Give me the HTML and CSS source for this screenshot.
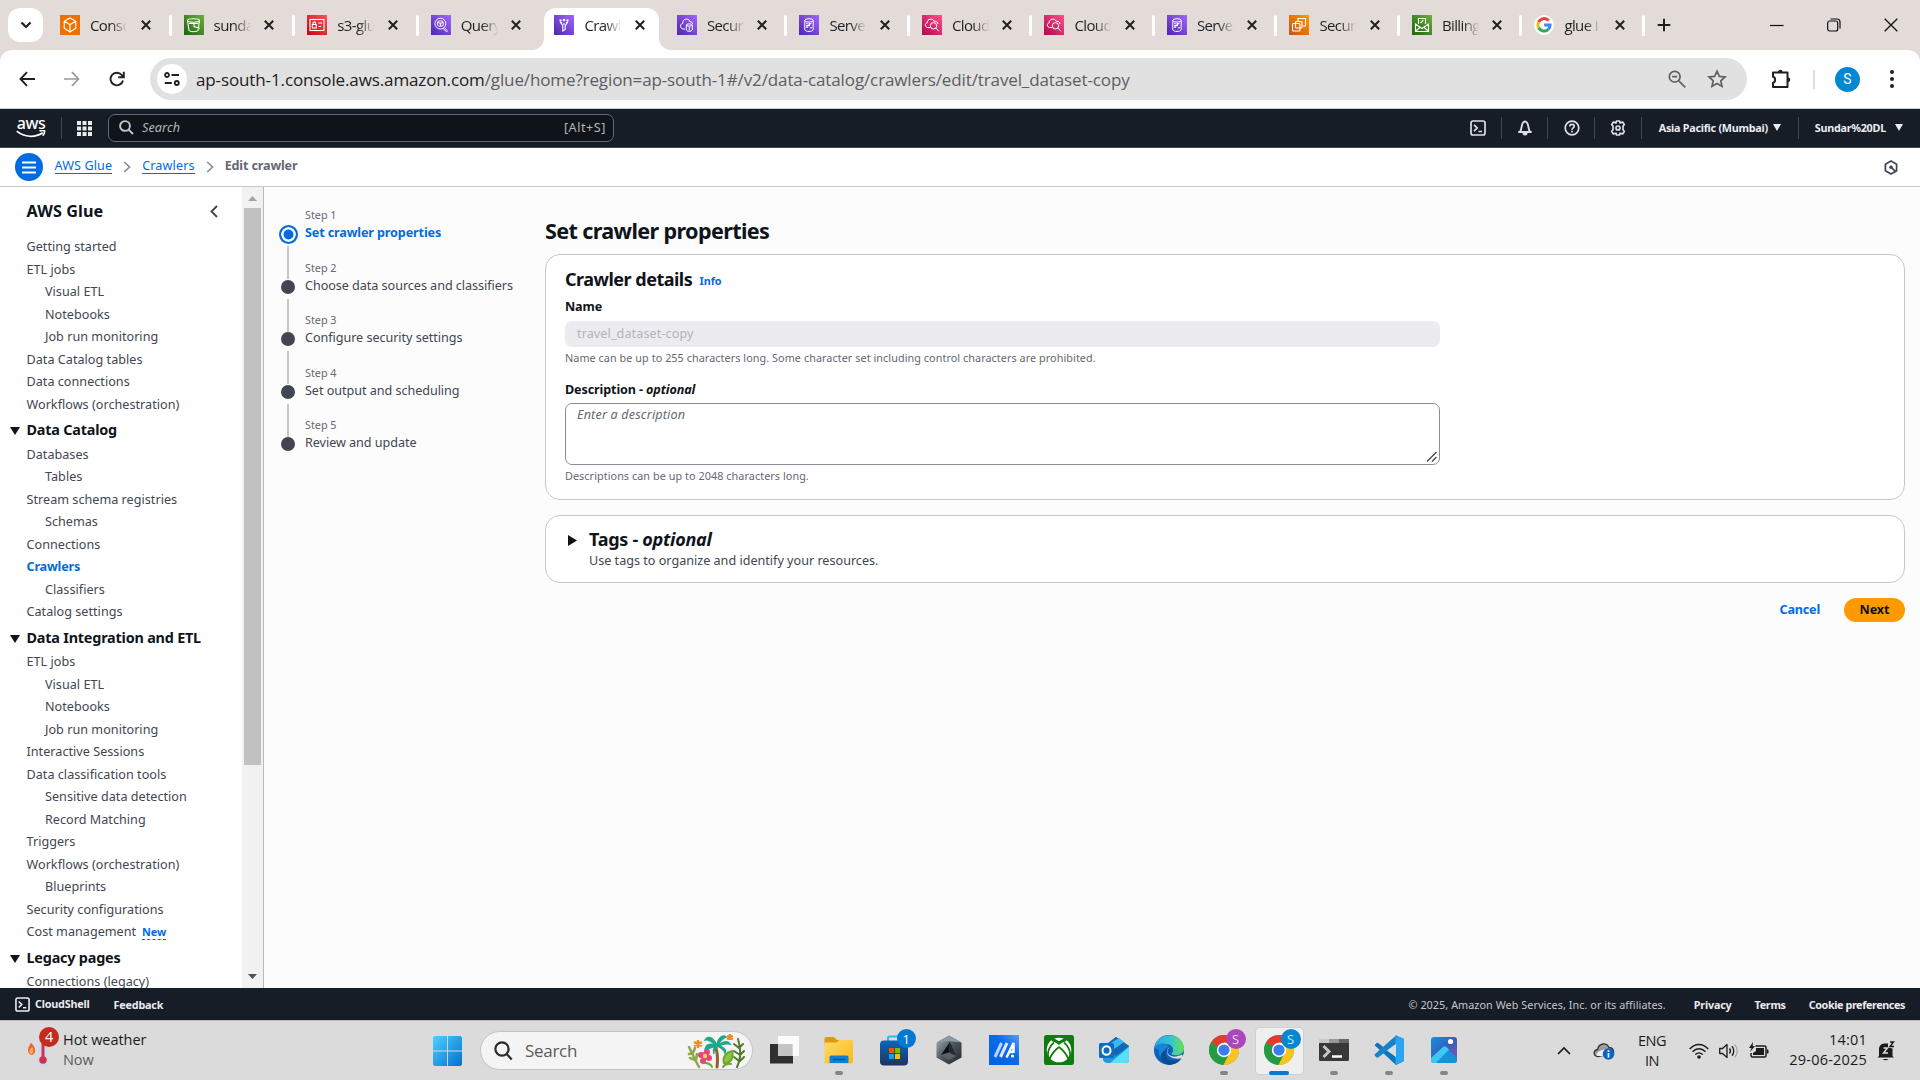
FILE: index.html
```html
<!DOCTYPE html>
<html lang="en">
<head>
<meta charset="utf-8">
<title>Crawlers - AWS Glue</title>
<link rel="stylesheet" href="styles.css">
</head>
<body>
<svg class="defs" aria-hidden="true">
  <defs>
    <linearGradient id="gPurple" x1="0" y1="1" x2="1" y2="0"><stop offset="0" stop-color="#4d27aa"/><stop offset="1" stop-color="#a166ff"/></linearGradient>
    <linearGradient id="gPink" x1="0" y1="1" x2="1" y2="0"><stop offset="0" stop-color="#b0084d"/><stop offset="1" stop-color="#ff4f8b"/></linearGradient>
    <linearGradient id="gGreen" x1="0" y1="1" x2="1" y2="0"><stop offset="0" stop-color="#1b660f"/><stop offset="1" stop-color="#6cae3e"/></linearGradient>
    <linearGradient id="gRed" x1="0" y1="1" x2="1" y2="0"><stop offset="0" stop-color="#bd0816"/><stop offset="1" stop-color="#ff5252"/></linearGradient>
    <linearGradient id="gOrange" x1="0" y1="1" x2="1" y2="0"><stop offset="0" stop-color="#c8511b"/><stop offset="1" stop-color="#ff9900"/></linearGradient>
    <linearGradient id="gWin" x1="0" y1="0" x2="1" y2="1"><stop offset="0" stop-color="#4fd0ff"/><stop offset="1" stop-color="#0070d0"/></linearGradient>
    <linearGradient id="gFolder" x1="0" y1="0" x2="1" y2="1"><stop offset="0" stop-color="#ffdb6b"/><stop offset="1" stop-color="#fdb813"/></linearGradient>
    <linearGradient id="gStore" x1="0" y1="0" x2="0" y2="1"><stop offset="0" stop-color="#0a66b8"/><stop offset="1" stop-color="#1d355f"/></linearGradient>
    <linearGradient id="gEdge" x1="0" y1="0" x2="1" y2="0"><stop offset="0" stop-color="#2aa8e0"/><stop offset=".55" stop-color="#35c5cf"/><stop offset="1" stop-color="#69e04f"/></linearGradient>
    <linearGradient id="gPhoto" x1="0" y1="0" x2="1" y2="1"><stop offset="0" stop-color="#1592e0"/><stop offset=".5" stop-color="#365fb8"/><stop offset="1" stop-color="#9a4fb8"/></linearGradient>
    <linearGradient id="gHex" x1="0" y1="0" x2="1" y2="1"><stop offset="0" stop-color="#aab4bc"/><stop offset=".5" stop-color="#4c535a"/><stop offset="1" stop-color="#23272b"/></linearGradient>
    <linearGradient id="gMyAsus" x1="1" y1="0" x2="0" y2="1"><stop offset="0" stop-color="#5c9bff"/><stop offset=".4" stop-color="#0a6be8"/><stop offset="1" stop-color="#0560e0"/></linearGradient>
    <symbol id="close" viewBox="0 0 12 12"><path d="M1.800 1.800l8.400 8.400M10.200 1.800l-8.400 8.400" fill="none" stroke="#1f2023" stroke-width="2"/></symbol>
    <symbol id="athena" viewBox="0 0 20 20"><rect width="20" height="20" fill="url(#gPurple)"/><g fill="none" stroke="#fff" stroke-width="1"><circle cx="9.400" cy="8.600" r="5.400"/><path d="M13.200 12.500l3.300 3.300-1 1-3.400-3.300"/><ellipse cx="9.400" cy="7" rx="2.700" ry="1.100"/><path d="M6.700 7v3.400c.8 1.200 4.600 1.200 5.400 0V7M9.400 8v3"/></g></symbol>
    <symbol id="cloudsec" viewBox="0 0 20 20"><rect width="20" height="20" fill="url(#gPurple)"/><g fill="none" stroke="#fff" stroke-width="1"><path d="M8 14H6C2.500 13.500 3 8.500 5.800 8.500 5.300 3.500 12 2.500 13 6.800c1.800 0 2.600 1 2.600 2.200"/><ellipse cx="12.300" cy="10" rx="3" ry="1.100"/><path d="M9.300 10v5c1 1.800 5 1.800 6 0v-5M12.300 11.500v4"/></g></symbol>
    <symbol id="redshift" viewBox="0 0 20 20"><rect width="20" height="20" fill="url(#gPurple)"/><g fill="none" stroke="#fff" stroke-width="1"><ellipse cx="10" cy="5.400" rx="4.200" ry="1.700"/><path d="M5.800 5.400v9.400c1 2.200 7.400 2.200 8.400 0V5.400"/><path d="M8 13v-2.500h2.300V8.600h2M8 9V8M12 12v1.500" stroke-width="1.300"/></g></symbol>
    <symbol id="cloudwatch" viewBox="0 0 20 20"><rect width="20" height="20" fill="url(#gPink)"/><g fill="none" stroke="#fff" stroke-width="1"><path d="M8 12.500H5.500C2.500 12 2.800 8 5.200 8 4.800 3.600 11 2.700 12.200 6.300c2.500-.3 3.800 1.200 3.800 2.700"/><circle cx="11.500" cy="10.800" r="3.200"/><path d="M13.800 13l3 3.200"/></g></symbol>
  </defs>
</svg>

<header class="tabstrip">
  <button class="tab-search"><svg width="12" height="8" viewBox="0 0 12 8"><path d="M1.500 1.500L6 6l4.500-4.500" fill="none" stroke="#1f2023" stroke-width="2.200"/></svg></button>
  <div class="tab wide"><svg class="fav" viewBox="0 0 20 20"><rect width="20" height="20" fill="#ed7100"/><path d="M10 3l5.800 3.200v7L10 17l-5.800-3.800v-7zM4.200 6.200L10 9.500l5.800-3.300M10 9.500V17" fill="none" stroke="#fff" stroke-width="1.100"/></svg><span class="tab-title">Conso</span><svg class="x"><use href="#close"/></svg></div>
  <div class="tab wide"><svg class="fav" viewBox="0 0 20 20"><rect width="20" height="20" fill="url(#gGreen)"/><g fill="none" stroke="#fff" stroke-width="1.100"><ellipse cx="9.500" cy="5.500" rx="6" ry="1.700"/><path d="M3.500 5.500L5 15.500c1.500 1.700 7.500 1.700 9 0l1.500-10M5 8.500h9M10 9v2.500l6 2"/></g></svg><span class="tab-title">sunda</span><svg class="x"><use href="#close"/></svg></div>
  <div class="tab wide"><svg class="fav" viewBox="0 0 20 20"><rect width="20" height="20" fill="url(#gRed)"/><g fill="none" stroke="#fff" stroke-width="1.100"><rect x="3" y="4.500" width="14" height="11"/><rect x="5.300" y="9.500" width="4" height="3.500"/><path d="M6 9.500V8c0-1.500 2.600-1.500 2.600 0v1.500M11.500 8h3.500M11.500 11.500h2.500"/></g></svg><span class="tab-title">s3-glu</span><svg class="x"><use href="#close"/></svg></div>
  <div class="tab wide last"><svg class="fav"><use href="#athena"/></svg><span class="tab-title">Query</span><svg class="x"><use href="#close"/></svg></div>
  <div class="tab active"><svg class="fav" viewBox="0 0 20 20"><rect width="20" height="20" fill="url(#gPurple)"/><g fill="none" stroke="#fff" stroke-width="1.100"><path d="M6 7l2.800 3.500V16l2.400-1.500v-4L14 7M6 7l2.200.8M14 7l-2.200.8"/><circle cx="10" cy="5" r=".8"/><circle cx="6.500" cy="5.500" r=".6"/><circle cx="13.500" cy="5.500" r=".6"/><path d="M10 8v2"/></g></svg><span class="tab-title">Crawl</span><svg class="x"><use href="#close"/></svg></div>
  <div class="tab"><svg class="fav"><use href="#cloudsec"/></svg><span class="tab-title">Secur</span><svg class="x"><use href="#close"/></svg></div>
  <div class="tab"><svg class="fav"><use href="#redshift"/></svg><span class="tab-title">Serve</span><svg class="x"><use href="#close"/></svg></div>
  <div class="tab"><svg class="fav"><use href="#cloudwatch"/></svg><span class="tab-title">Cloud</span><svg class="x"><use href="#close"/></svg></div>
  <div class="tab"><svg class="fav"><use href="#cloudwatch"/></svg><span class="tab-title">Cloud</span><svg class="x"><use href="#close"/></svg></div>
  <div class="tab"><svg class="fav"><use href="#redshift"/></svg><span class="tab-title">Serve</span><svg class="x"><use href="#close"/></svg></div>
  <div class="tab"><svg class="fav" viewBox="0 0 20 20"><rect width="20" height="20" fill="url(#gOrange)"/><g fill="none" stroke="#fff" stroke-width="1.100"><rect x="3.500" y="8.500" width="7.500" height="7.500" rx="1"/><rect x="6.500" y="6.500" width="6.500" height="6.500" rx="1"/><path d="M9 6V3.500h7.500v7.500H13.500"/></g></svg><span class="tab-title">Secur</span><svg class="x"><use href="#close"/></svg></div>
  <div class="tab"><svg class="fav" viewBox="0 0 20 20"><rect width="20" height="20" fill="url(#gGreen)"/><g fill="none" stroke="#fff" stroke-width="1.100"><path d="M6.500 9V3.500h7V9M8.500 8l2.800-2.800M3.500 9v7.500h13V9L10 13.500zM3.800 16l4-3.500M16.200 16l-4-3.500"/></g></svg><span class="tab-title">Billing</span><svg class="x"><use href="#close"/></svg></div>
  <div class="tab"><svg class="fav" viewBox="0 0 20 20"><circle cx="10" cy="10" r="10" fill="#fff"/><g fill="none" stroke-width="3"><path d="M14.800 5.600A6.200 6.200 0 0 0 4.600 7.200" stroke="#ea4335"/><path d="M4.600 7.200a6.200 6.200 0 0 0 0 5.600" stroke="#fbbc04"/><path d="M4.600 12.800a6.200 6.200 0 0 0 9.500 1.800" stroke="#34a853"/><path d="M14 14.700c1.500-1.300 2.200-3 2.100-4.700H10.200" stroke="#4285f4"/></g></svg><span class="tab-title">glue i</span><svg class="x"><use href="#close"/></svg></div>
  <svg class="newtab" viewBox="0 0 14 14"><path d="M7 .7v12.600M.7 7h12.600" stroke="#1f2023" stroke-width="2"/></svg>
  <div class="wincontrols">
    <svg width="14" height="14" viewBox="0 0 14 14"><path d="M0 7.500h13.500" stroke="#111" stroke-width="1.200"/></svg>
    <svg width="14" height="14" viewBox="0 0 14 14"><g fill="none" stroke="#111" stroke-width="1.200"><rect x=".7" y="3" width="10" height="10" rx="2"/><path d="M3.500 1H10c1.800 0 3 1.200 3 3v6.500"/></g></svg>
    <svg width="14" height="14" viewBox="0 0 14 14"><path d="M.7.700l12.600 12.600M13.300.700L.7 13.300" stroke="#111" stroke-width="1.300"/></svg>
  </div>
</header>

<div class="toolbar-bg"><div class="toolbar">
  <svg class="nav-ic" viewBox="0 0 16 16"><path d="M8 1.200L1.500 8 8 14.800M1.500 8H16" fill="none" stroke="#1f2023" stroke-width="1.900"/></svg>
  <svg class="nav-ic" viewBox="0 0 16 16"><path d="M8 1.200L14.500 8 8 14.800M14.500 8H0" fill="none" stroke="#9a9a9a" stroke-width="1.700"/></svg>
  <svg class="nav-ic" viewBox="0 0 16 16"><path d="M14 9.500A6.300 6.300 0 1 1 12.700 4L14.500 6M14.800.700V6.200H9.300" fill="none" stroke="#1f2023" stroke-width="1.900"/></svg>
  <div class="omnibox">
    <span class="site-info"><svg width="16" height="14" viewBox="0 0 16 14"><g fill="none" stroke="#1f2023" stroke-width="1.800"><circle cx="3" cy="3" r="2"/><path d="M7.500 3H15M.8 11h7"/><circle cx="12.800" cy="11" r="2"/></g></svg></span>
    <span class="url">ap-south-1.console.aws.amazon.com<span class="url-path">/glue/home?region=ap-south-1#/v2/data-catalog/crawlers/edit/travel_dataset-copy</span></span>
    <svg class="zoom-ic" viewBox="0 0 18 18"><g fill="none" stroke="#606060" stroke-width="1.700"><circle cx="6.700" cy="6.700" r="5.400"/><path d="M10.800 10.800l6.500 6.500M4.200 6.700h5"/></g></svg>
    <svg class="star-ic" viewBox="0 0 20 20"><path d="M10 2.200l2.400 5.200 5.600.6-4.200 3.800 1.200 5.600-5-2.900-5 2.900 1.200-5.600L2 8l5.600-.6z" fill="none" stroke="#606060" stroke-width="1.700"/></svg>
  </div>
  <svg class="ext-ic" viewBox="0 0 22 22"><path d="M3 4.500h14.500v14.500H3v-4.200c2.800-.6 2.800-5.500 0-6z" fill="none" stroke="#1f2023" stroke-width="2" stroke-linejoin="round"/><path d="M8 4a2.300 2.300 0 0 1 4.600 0zM18 9.500a2.300 2.300 0 0 1 0 4.600z" fill="#1f2023"/></svg>
  <span class="tb-sep"></span>
  <span class="avatar">S</span>
  <svg class="dots" viewBox="0 0 4 18"><circle cx="2" cy="2" r="2"/><circle cx="2" cy="9" r="2"/><circle cx="2" cy="16" r="2"/></svg>
</div></div>

<div class="awsbar">
  <div class="aws-logo"><span>aws</span><svg viewBox="0 0 30 8"><path d="M.7 1.200c8 6.500 18.500 6.500 26 1.500M23.500 1c2-.6 4.200-.7 5 0 .3 1.300-.5 3.300-1.800 4.800" fill="none" stroke="#fff" stroke-width="1.700"/></svg></div>
  <span class="bar-sep"></span>
  <svg class="grid-ic" viewBox="0 0 15 15"><g fill="#e9ebed"><path d="M0 0h4v4H0zM5.500 0h4v4h-4zM11 0h4v4h-4zM0 5.500h4v4H0zM5.500 5.500h4v4h-4zM11 5.500h4v4h-4zM0 11h4v4H0zM5.500 11h4v4h-4zM11 11h4v4h-4z"/></g></svg>
  <div class="aws-search"><svg width="15" height="15" viewBox="0 0 15 15"><g fill="none" stroke="#c6c6cd" stroke-width="1.900"><circle cx="6" cy="6" r="4.900"/><path d="M9.600 9.600L14 14"/></g></svg><em>Search</em><span>[Alt+S]</span></div>
  <div class="aws-tools">
    <i><svg width="16" height="16" viewBox="0 0 16 16"><g fill="none" stroke="#dedee3" stroke-width="1.700"><rect x="1" y="1" width="14" height="14" rx="2"/><path d="M4 4.800L7.200 8 4 11.200M8.500 11.500H12"/></g></svg></i>
    <i><svg width="16" height="16" viewBox="0 0 16 16"><path d="M3.500 11C5 9 4 1.500 8 1.500S11 9 12.500 11l1.500 1H2z" fill="none" stroke="#dedee3" stroke-width="1.900" stroke-linejoin="round"/><path d="M5.500 13h5a2.500 2.500 0 0 1-5 0z" fill="#dedee3"/></svg></i>
    <i><svg width="16" height="16" viewBox="0 0 16 16"><g fill="none" stroke="#dedee3" stroke-width="1.700"><circle cx="8" cy="8" r="6.800"/><path d="M5.800 6.500c0-3 4.400-2.800 4.400-.2C10.200 8 8 7.700 8 9.700M8 10.800v1.700"/></g></svg></i>
    <i><svg width="16" height="16" viewBox="0 0 16 16"><g fill="none" stroke="#dedee3" stroke-width="1.700" stroke-linejoin="round"><path d="M6.500 1h3l.5 1.900 2.600-.8 1.700 2.500L13 6v3.800l1.300 1.700-1.700 2.400-2.600-.7-.5 1.800h-3L6 13.200l-2.600.7-1.700-2.400L3 9.800V6L1.700 4.600l1.700-2.500 2.600.8z"/><circle cx="8" cy="8" r="2"/></g></svg></i>
  </div>
  <div class="menu region"><b>Asia Pacific (Mumbai)</b><svg class="caret" viewBox="0 0 8 7"><path d="M0 0h8L4 7z" fill="#ebebf0"/></svg></div>
  <div class="menu user"><b>Sundar%20DL</b><svg class="caret" viewBox="0 0 8 7"><path d="M0 0h8L4 7z" fill="#ebebf0"/></svg></div>
</div>

<nav class="crumbs">
  <span class="burger"><svg width="14" height="13" viewBox="0 0 14 13"><path d="M0 1.500h14M0 6.500h14M0 11.500h14" stroke="#fff" stroke-width="1.800"/></svg></span>
  <a>AWS Glue</a><svg class="chev" viewBox="0 0 8 12"><path d="M1.200 1L6.500 6l-5.300 5" fill="none" stroke="#8c8c94" stroke-width="1.700"/></svg>
  <a>Crawlers</a><svg class="chev" viewBox="0 0 8 12"><path d="M1.200 1L6.500 6l-5.300 5" fill="none" stroke="#8c8c94" stroke-width="1.700"/></svg>
  <b>Edit crawler</b>
  <svg class="hex" viewBox="0 0 14 15"><path d="M7 1l5.600 3.200v6.600L7 14l-5.600-3.200V4.200z" fill="none" stroke="#424650" stroke-width="1.700"/><circle cx="7" cy="7.300" r="1.800" fill="#424650"/><path d="M7 7.300l5 4.500" stroke="#424650" stroke-width="1.700"/></svg>
</nav>

<div class="body">
  <aside class="side">
    <div class="side-list">
      <div class="side-title"><span>AWS Glue</span><svg width="8" height="13" viewBox="0 0 8 13"><path d="M7 1L1.500 6.500 7 12" fill="none" stroke="#424650" stroke-width="1.900"/></svg></div>
      <a>Getting started</a><a>ETL jobs</a><a class="sub">Visual ETL</a><a class="sub">Notebooks</a><a class="sub">Job run monitoring</a><a>Data Catalog tables</a><a>Data connections</a><a>Workflows (orchestration)</a>
      <h4>Data Catalog</h4>
      <a>Databases</a><a class="sub">Tables</a><a>Stream schema registries</a><a class="sub">Schemas</a><a>Connections</a><a class="current">Crawlers</a><a class="sub">Classifiers</a><a>Catalog settings</a>
      <h4>Data Integration and ETL</h4>
      <a>ETL jobs</a><a class="sub">Visual ETL</a><a class="sub">Notebooks</a><a class="sub">Job run monitoring</a><a>Interactive Sessions</a><a>Data classification tools</a><a class="sub">Sensitive data detection</a><a class="sub">Record Matching</a><a>Triggers</a><a>Workflows (orchestration)</a><a class="sub">Blueprints</a><a>Security configurations</a><a>Cost management <span class="new">New</span></a>
      <h4>Legacy pages</h4>
      <a>Connections (legacy)</a>
    </div>
    <div class="scroll"><svg width="9" height="5" viewBox="0 0 9 5"><path d="M0 5h9L4.500 0z" fill="#a3a3a3"/></svg><span class="thumb"></span><svg width="9" height="5" viewBox="0 0 9 5"><path d="M0 0h9L4.500 5z" fill="#505050"/></svg></div>
  </aside>

  <ol class="steps">
    <li class="on"><span class="rail"><span class="ring"></span></span><div><small>Step 1</small><p>Set crawler properties</p></div></li>
    <li><span class="rail"><span class="dot"></span></span><div><small>Step 2</small><p>Choose data sources and classifiers</p></div></li>
    <li><span class="rail"><span class="dot"></span></span><div><small>Step 3</small><p>Configure security settings</p></div></li>
    <li><span class="rail"><span class="dot"></span></span><div><small>Step 4</small><p>Set output and scheduling</p></div></li>
    <li><span class="rail"><span class="dot"></span></span><div><small>Step 5</small><p>Review and update</p></div></li>
  </ol>

  <main class="content">
    <h1>Set crawler properties</h1>
    <section class="card details">
      <h2>Crawler details <a>Info</a></h2>
      <label>Name</label>
      <div class="input">travel_dataset-copy</div>
      <p class="hint">Name can be up to 255 characters long. Some character set including control characters are prohibited.</p>
      <label class="second">Description - <em>optional</em></label>
      <div class="textarea">Enter a description<svg width="10" height="10" viewBox="0 0 10 10"><path d="M0 9.500L9.500 0M5 9.500L9.500 5" stroke="#444" stroke-width="1.300"/></svg></div>
      <p class="hint">Descriptions can be up to 2048 characters long.</p>
    </section>
    <section class="card tags">
      <svg width="9" height="11" viewBox="0 0 9 11"><path d="M0 0l9 5.500L0 11z" fill="#0f141a"/></svg>
      <div><h2>Tags - <em>optional</em></h2><p>Use tags to organize and identify your resources.</p></div>
    </section>
    <div class="actions"><button class="link">Cancel</button><button class="primary">Next</button></div>
  </main>
</div>

<footer class="awsfoot">
  <svg width="15" height="15" viewBox="0 0 16 16"><g fill="none" stroke="#ebebf0" stroke-width="1.700"><rect x="1" y="1" width="14" height="14" rx="2"/><path d="M4 4.800L7.200 8 4 11.200M8.500 11.500H12"/></g></svg>
  <b class="f-shell">CloudShell</b><b class="f-feed">Feedback</b>
  <span class="f-copy">© 2025, Amazon Web Services, Inc. or its affiliates.</span>
  <b class="f-priv">Privacy</b><b class="f-terms">Terms</b><b class="f-cook">Cookie preferences</b>
</footer>

<div class="taskbar">
  <div class="weather">
    <svg width="36" height="40" viewBox="0 0 36 40"><path d="M5 24c-5-3-3-8 0-12 2 1 5 6 4 9-1 2-2 3-4 3z" fill="#f0603c"/><path d="M5 23c-3-2-1-5 1-7 2 3 2 6-1 7z" fill="#ffb04a"/><path d="M13 10v16a5.500 5.500 0 1 0 8 0V10z" fill="#c5dcf4"/><circle cx="17" cy="29" r="3.800" fill="#d8304c"/><path d="M15.500 12h3v16h-3z" fill="#d8304c"/></svg>
    <span class="count">4</span>
    <div><p>Hot weather</p><p class="dim">Now</p></div>
  </div>
  <svg class="start" viewBox="0 0 29 30"><path d="M1.500 0h12.600v14.500H0v-13zM15 0h12.500l1.500 1.500v13H15zM0 15.500h14.100V30H1.500L0 28.500zM15 15.500h14v13L27.500 30H15z" fill="url(#gWin)"/></svg>
  <div class="tsearch"><svg width="19" height="20" viewBox="0 0 19 20"><g fill="none" stroke="#2b2b2b" stroke-width="2.200"><circle cx="8" cy="8" r="6.600"/><path d="M12.700 13l5 5.500"/></g></svg><span>Search</span>
    <svg class="palms" viewBox="0 0 58 36"><g fill="none" stroke-linecap="round"><path d="M30 34c1-8 1-12-1-19" stroke="#96602c" stroke-width="3"/><path d="M30 13C26 3 20 3 18 7c4-1 7 2 12 6-7-4-12-1-12 5 3-3 7-4 12-5 6-4 10-6 13-2-5-1-9 1-13 2 5 0 10 3 8 7-1-4-4-5-8-7-1 2-4 5-3 8-1-3-1-6 3-8zM30 13c0-6 5-12 9-9-4 1-6 4-9 9z" fill="#1fa888" stroke="#1fa888" stroke-width="1.500"/><path d="M12 34C8 27 5 20 2 14M5 20l-3 1M8 27l-5-2M6 20l2-5M9 27l1-6" stroke="#8fa84a" stroke-width="2.500"/><path d="M50 34c4-8 4-18 1-28M52 28l-5-4M53 22l-6-4M52 15l-5-4M53 28l4-4M53 22l4-4M52 15l4-4" stroke="#4f7a2c" stroke-width="2"/><path d="M37 30c-2-6 3-11 8-12 2 6-1 13-8 12zM25 34c-1-3-4-4-7-4M36 34c2-3 5-4 8-3" fill="#8cc63f" stroke="#6ea832" stroke-width="2"/></g><g fill="#e8467c"><circle cx="14" cy="22" r="3"/><circle cx="20" cy="19" r="3"/><circle cx="22" cy="25" r="3"/><circle cx="16" cy="28" r="3"/><circle cx="18" cy="23" r="4"/></g><circle cx="18" cy="23" r="2.200" fill="#ffd24a"/><path d="M11 7v8M7 9l8 4M15 9l-8 4M43 1v6M40 3l6 3M46 3l-6 3" stroke="#f08a24" stroke-width="2.500"/></svg>
  </div>
  <div class="apps">
    <div class="app"><svg viewBox="0 0 32 32"><path d="M2 10h23v19.500H2z" fill="#2f2f2f"/><path d="M10 2h21v20H10z" fill="#fff" opacity=".88"/><path d="M10 10h14.500v12H10z" fill="#c4c4c4"/></svg></div>
    <div class="app run"><svg viewBox="0 0 32 32"><path d="M1.500 5q0-2 2-2H11l3 3h14v6H1.500z" fill="#dc9a0e"/><path d="M1.500 8.500h12L16 6h12.500q1.500 0 1.500 1.500v20q0 2-2 2H1.500z" fill="url(#gFolder)"/><path d="M6.500 29v-6q0-1.500 1.500-1.500h16q1.500 0 1.500 1.500v6z" fill="#0f7fd8"/><path d="M10 25.500h12" stroke="#0a4e8c" stroke-width="1.300"/></svg></div>
    <div class="app"><svg viewBox="0 0 32 32"><path d="M10 8V4q0-1.500 1.500-1.500h10" fill="none" stroke="#35b6ee" stroke-width="2"/><rect x="2" y="6.500" width="28" height="25" rx="4" fill="url(#gStore)"/><path fill="#f25022" d="M11 14h5v5h-5z"/><path fill="#7fba00" d="M17 14h5v5h-5z"/><path fill="#00a4ef" d="M11 20h5v5h-5z"/><path fill="#ffb900" d="M17 20h5v5h-5z"/></svg><span class="badge one">1</span></div>
    <div class="app"><svg viewBox="0 0 32 32"><path d="M16 1.500l12.500 7v15L16 30.500 3.500 23.500v-15z" fill="url(#gHex)"/><path d="M16 1.500l12.500 7L16 7 3.500 8.500z" fill="#8d979f"/><path d="M17 8L8 21l8-2.500z" fill="#0d1013"/><path d="M17 8l6 14-7-3.500z" fill="#22282d"/><path d="M8 21l8-2.500 7 3.500-7 4z" fill="#59626a"/></svg></div>
    <div class="app"><svg viewBox="0 0 32 32"><path d="M1 1h30v30H1z" fill="url(#gMyAsus)"/><path d="M7 23l6.500-14" stroke="#b9d5ff" stroke-width="3"/><path d="M12.500 23L19 9" stroke="#dbe9ff" stroke-width="3"/><path d="M18.500 23.500L25.500 9v10M21 18h4" stroke="#fff" stroke-width="2.500" fill="none"/><circle cx="24.500" cy="22" r="1.600" fill="#fff"/></svg></div>
    <div class="app"><svg viewBox="0 0 32 32"><rect x="1" y="1" width="30" height="30" rx="2.500" fill="#107c10"/><circle cx="16" cy="16" r="12.300" fill="#fff"/><path d="M7 4.500c4-.5 6.500 1 9 2.700 2.500-1.700 5-3.200 9-2.700l-2.500 3c-2 .2-4.500 1.700-6.500 3.500-2-1.800-4.500-3.300-6.500-3.500z" fill="#107c10"/><path d="M16 13c-4 3-8 8-9.500 12.500C2.500 19 7 11.500 11 8.500M16 13c4 3 8 8 9.500 12.500C29.500 19 25 11.500 21 8.500" fill="none" stroke="#107c10" stroke-width="1.700"/></svg></div>
    <div class="app"><svg viewBox="0 0 32 32"><path d="M5 13L18 3l13 9v14q0 3-3 3H10q-4 0-5-3z" fill="#1c9be0"/><path d="M5 13L18 3l13 9-13 10z" fill="#1266b5"/><path d="M8 12l13-8 5 4-14 10z" fill="#37b9f1"/><path d="M31 13L12 29h16q3 0 3-3z" fill="#59dff7"/><rect x="1" y="9" width="15" height="15" rx="1.500" fill="#0f6cbd"/><ellipse cx="8.500" cy="16.500" rx="4" ry="4.300" fill="none" stroke="#fff" stroke-width="2"/></svg></div>
    <div class="app"><svg viewBox="0 0 32 32"><circle cx="16" cy="16" r="15" fill="#0c62b8"/><path d="M1.500 15C2.500-3 30-3 31 14c.5 7-9 9-13 6 4-3 2-10-5-10C7 10 2 12 1.500 15z" fill="url(#gEdge)"/><path d="M1.300 14C5 8 14 8 16 13c-5 0-7 8-3 13-6-1-8-6-7-10z" fill="#1684d8"/><path d="M13 16c-3 8 5 14 15 9-6 8-17 7-20 0-1-4 1-8 5-9z" fill="#0c4a91"/><path d="M17 13.500c-4 1-4 8 3 9 3 .5 7-1 9-2 2 2 0 4-2 4-6 1-14-2-13-8 .5-2 1.500-3 3-3z" fill="#dcdcdc"/></svg></div>
    <div class="app run"><svg viewBox="0 0 32 32"><circle cx="16" cy="16" r="15" fill="#34a853"/><path d="M16 16L3 8.500a15 15 0 0 1 26 0z" fill="#e33b2e"/><path d="M16 16L3 8.500A15 15 0 0 0 15.500 31l7-11z" fill="#249a44"/><path d="M16 16h7l-7.500 15A15 15 0 0 0 29 8.500H16z" fill="#fcc31e"/><circle cx="16" cy="16" r="7.200" fill="#fff"/><circle cx="16" cy="16" r="5.600" fill="#3b7ded"/></svg><span class="badge purple">S</span></div>
    <div class="app run focus"><svg viewBox="0 0 32 32"><circle cx="16" cy="16" r="15" fill="#34a853"/><path d="M16 16L3 8.500a15 15 0 0 1 26 0z" fill="#e33b2e"/><path d="M16 16L3 8.500A15 15 0 0 0 15.500 31l7-11z" fill="#249a44"/><path d="M16 16h7l-7.500 15A15 15 0 0 0 29 8.500H16z" fill="#fcc31e"/><circle cx="16" cy="16" r="7.200" fill="#fff"/><circle cx="16" cy="16" r="5.600" fill="#3b7ded"/></svg><span class="badge blue">S</span></div>
    <div class="app run"><svg viewBox="0 0 32 32"><rect x="1" y="5" width="30" height="22" rx="1.500" fill="#383838"/><path d="M1 5h10v4H1z" fill="#c8c8c8"/><path d="M11 5h10v4H11z" fill="#999"/><path d="M21 5h10v4H21z" fill="#666"/><path d="M5.500 12l5.500 5.500L5.500 23" fill="none" stroke="#c4c4c4" stroke-width="3"/><path d="M14 22.500h10" stroke="#fff" stroke-width="2.500"/></svg></div>
    <div class="app run"><svg viewBox="0 0 32 32"><path d="M23 1.500l8 3.500v22l-8 4L3 12.500q-2-1-.5-2.500l2-1.500L23 23z" fill="#0a76bd"/><path d="M23 1.500L2 20q-1 1 0 2l2.500 2L23 10z" fill="#1684cc"/><path d="M22.500 1l8.500 4v22l-8.500 4z" fill="#2aa5f2"/><path d="M23 10v13l-9-6.500z" fill="#dcdcdc"/></svg></div>
    <div class="app run"><svg viewBox="0 0 32 32"><rect x="3" y="3" width="26" height="26" rx="3" fill="url(#gPhoto)"/><path d="M4 27L15 14q2-2 4 0l10 10v2q0 3-3 3H6z" fill="#1493dc"/><path d="M3 24l12-11q1.500-1.500 3.500 0L21 15.500 8 29H6q-3 0-3-3z" fill="#3bc8f4"/><circle cx="22.500" cy="7.500" r="2.600" fill="#fff"/></svg></div>
  </div>
  <div class="tray">
    <svg class="t-up" viewBox="0 0 14 9"><path d="M1 8l6-6 6 6" fill="none" stroke="#1b1b1b" stroke-width="1.700"/></svg>
    <svg class="t-cloud" viewBox="0 0 22 18"><path d="M5 14.500C0 14 0 8.500 4.500 7.500 6 1 13.500 0 16 5.500c4 0 5 3 4.500 5.500z" fill="#9d9d9d" stroke="#333" stroke-width="1.300"/><path d="M3 13c2-4 8-7 11-4v5H5z" fill="#efefef"/><circle cx="15.500" cy="12" r="5.800" fill="#0a66c2"/><path d="M15.500 11v4.500M15.500 8.200v1.700" stroke="#fff" stroke-width="1.700"/></svg>
    <div class="lang">ENG<br>IN</div>
    <svg class="t-wifi" viewBox="0 0 20 16"><g fill="none" stroke="#1b1b1b" stroke-width="1.400"><path d="M.7 6c5.500-6 13-6 18.600 0M3.500 8.800c4-4 9-4 13 0M6.300 11.600c2.300-2.200 5-2.200 7.400 0"/></g><circle cx="10" cy="14" r="1.800" fill="#1b1b1b"/></svg>
    <svg class="t-vol" viewBox="0 0 20 16"><g fill="none" stroke="#1b1b1b" stroke-width="1.300" stroke-linejoin="round"><path d="M.7 5.500h2.800L8 1.500v13l-4.500-4H.7zM10.500 5.500c1.200 1.500 1.200 3.500 0 5M13 3.300c2.300 2.600 2.300 6.800 0 9.400"/><path d="M15.700 1.500c3.300 3.600 3.300 9.400 0 13" stroke="#aaa"/></g></svg>
    <svg class="t-bat" viewBox="0 0 20 17"><path d="M6.500 4h9q1.500 0 1.500 1.500v8q0 1.500-1.500 1.500H3.500Q2 15 2 13.500V11" fill="none" stroke="#1b1b1b" stroke-width="1.500"/><path d="M7 6h8v7H4v-2l3-2zM4 0L0 6h2.500L1 10l5-6H3.700zM18 7.500h1.200q.8 2 0 4H18z" fill="#1b1b1b"/></svg>
    <div class="clock">14:01<br>29-06-2025</div>
    <svg class="t-bell" viewBox="0 0 18 20"><path d="M2 15V8.500C2 4.500 4.500 2.500 8 2.500h3v4l4.500 1V15l1.500 1.500H.5zM5.500 18h6q-3 2.500-6 0z" fill="#1b1b1b"/><path d="M6.500 7h4L6.500 12h4.500" fill="none" stroke="#ddd" stroke-width="1.400"/><path d="M13 1h3.500l-3.500 4.500h4" fill="none" stroke="#1b1b1b" stroke-width="1.400"/></svg>
  </div>
</div>
</body>
</html>
```
FILE: styles.css
```css
* { box-sizing: border-box; margin: 0; padding: 0; }
body {
  width: 1920px; height: 1080px; overflow: hidden;
  display: flex; flex-direction: column;
  font-family: "Noto Sans", "Open Sans", sans-serif;
  font-size: 12.6px; color: #424650; background: #fff;
}
svg { flex: none; display: block; }
button { border: 0; background: none; font: inherit; }
.defs { position: absolute; width: 0; height: 0; }

/* browser tabs */
.tabstrip { height: 50px; flex: none; background: #e3dbd8; display: flex; padding-left: 8px; font-family: "Open Sans", "Noto Sans", sans-serif; }
.tab-search { width: 35px; height: 34px; margin: 8px 5px 0 0; border-radius: 12px; background: #fff; display: flex; align-items: center; justify-content: center; }
.tab { width: 122.500px; height: 50px; padding-left: 12px; display: flex; align-items: center; position: relative; flex: none; }
.tab.wide { width: 123.600px; }
.tab::after { content: ""; position: absolute; right: 0; top: 15px; width: 3px; height: 21px; border-radius: 2px; background: #fff; }
.tab.last::after { display: none; }
.fav { width: 20px; height: 20px; position: relative; z-index: 1; }
.tab-title { width: 38px; margin-left: 10px; overflow: hidden; white-space: nowrap; font-size: 15px; letter-spacing: -.6px; color: #1f2023; position: relative; z-index: 1; -webkit-mask-image: linear-gradient(90deg, #000 55%, transparent 98%); mask-image: linear-gradient(90deg, #000 55%, transparent 98%); }
.x { width: 12px; height: 12px; margin-left: 11.500px; position: relative; z-index: 1; }
.tab.active::before { content: ""; position: absolute; left: 2px; top: 8px; width: 115px; height: 42px; border-radius: 12px 12px 0 0; background: #fff; }
.tab.active::after {
  left: -10px; right: auto; top: 38px; width: 139px; height: 12px; border-radius: 0;
  background:
    radial-gradient(circle at 0 0, transparent 11.500px, #fff 12.500px) left / 12px 12px no-repeat,
    radial-gradient(circle at 100% 0, transparent 11.500px, #fff 12.500px) right / 12px 12px no-repeat;
}
.newtab { width: 14px; height: 14px; margin: 18px 0 0 12px; }
.wincontrols { margin-left: auto; padding: 18px 22px 0 0; display: flex; gap: 43px; }

.toolbar-bg { height: 59px; flex: none; background: #e3dbd8; }
.toolbar { height: 59px; background: #fff; border-radius: 12px 12px 0 0; border-bottom: 1px solid #c9cdd0; display: flex; align-items: center; padding: 0 13px 0 19px; }
.nav-ic { width: 16px; height: 16px; margin-right: 29px; margin-bottom: 1px; }
.omnibox { width: 1597px; height: 42px; margin-left: -4px; border-radius: 21px; background: #e1e1e1; display: flex; align-items: center; padding-left: 7px; }
.site-info { width: 30px; height: 30px; border-radius: 50%; background: #fff; display: flex; align-items: center; justify-content: center; }
.url { margin-left: 9px; width: 1470px; font-family: "Open Sans", "Noto Sans", sans-serif; font-size: 17px; letter-spacing: -.12px; color: #1f2023; white-space: nowrap; }
.url-path { color: #5c5e61; }
.zoom-ic { width: 18px; height: 18px; margin-left: 2px; }
.star-ic { width: 20px; height: 20px; margin-left: 21px; }
.ext-ic { width: 22px; height: 22px; margin-left: 23px; }
.tb-sep { width: 2px; height: 19px; background: #e3dbd8; margin-left: 21px; }
.avatar { width: 25px; height: 25px; margin-left: 20px; border-radius: 50%; background: #0288d1; color: #fff; font: 14px/25px Roboto, sans-serif; text-align: center; }
.dots { width: 4px; height: 18px; margin-left: 30px; fill: #1f2023; }

/* console header */
.awsbar { height: 39px; flex: none; background: #161d26; border-bottom: 1px solid #424650; display: flex; align-items: center; padding-left: 16px; }
.aws-logo { width: 30px; color: #fff; padding-bottom: 2px; }
.aws-logo span { display: block; font-size: 16px; line-height: 12px; letter-spacing: -.5px; text-align: center; font-weight: 500; }
.aws-logo svg { width: 30px; height: 8px; margin-top: 1px; }
.bar-sep { width: 1px; height: 22px; background: #424650; margin-left: 15px; }
.grid-ic { width: 15px; height: 15px; margin-left: 15px; }
.aws-search { width: 506px; height: 28px; margin-left: 16px; border: 1px solid #656871; border-radius: 7px; background: #0f141a; display: flex; align-items: center; padding: 0 7px 1px 10px; color: #b4b4bb; }
.aws-search em { margin-left: 8px; letter-spacing: .1px; }
.aws-search span { margin-left: auto; letter-spacing: .55px; }
.aws-tools { margin-left: 841px; display: flex; }
.aws-tools i { width: 46.700px; height: 22px; border-right: 1px solid #424650; display: flex; align-items: center; justify-content: center; padding-left: 1px; }
.menu { display: flex; align-items: center; color: #ebebf0; font-size: 10.800px; letter-spacing: -.27px; }
.menu b { white-space: nowrap; padding-bottom: 2px; }
.menu.region { width: 157px; padding-left: 17px; border-right: 1px solid #424650; height: 22px; }
.menu.region b { width: 114px; }
.menu.user { padding-left: 16px; }
.menu.user b { width: 80px; }
.caret { width: 8px; height: 7px; margin-bottom: 1px; }

.crumbs { height: 39px; flex: none; border-bottom: 1px solid #c9cacf; display: flex; align-items: center; padding: 0 22px 0 15px; font-size: 12.600px; }
.crumbs a { color: #006ce0; border-bottom: 1px solid #006ce0; line-height: 15px; margin-bottom: 2px; letter-spacing: .12px; }
.crumbs b { color: #656871; margin-bottom: 3px; letter-spacing: -.15px; }
.burger { width: 28px; height: 28px; border-radius: 50%; background: #006ce0; display: flex; align-items: center; justify-content: center; margin-right: 11.500px; }
.chev { width: 8px; height: 12px; margin: 0 11px; }
.hex { width: 14px; height: 15px; margin-left: auto; }

/* console body */
.body { height: 801px; flex: none; display: flex; background: #fcfcfd; overflow: hidden; }
.side { width: 264px; flex: none; border-right: 1px solid #b9bac0; background: #fff; display: flex; }
.side-list { width: 242px; padding-left: 26.500px; white-space: nowrap; letter-spacing: .03px; }
.side-title { height: 49px; display: flex; justify-content: space-between; padding: 0 24px 1px 0; align-items: center; font-size: 16.200px; font-weight: 700; letter-spacing: .1px; color: #0f141a; }
.side-list a { display: block; height: 22.500px; line-height: 22.500px; }
.side-list a.sub { padding-left: 18.500px; }
.side-list a.current { color: #006ce0; font-weight: 700; letter-spacing: -.18px; }
.side-list h4 { margin-top: 3px; height: 24.500px; line-height: 22.500px; font-size: 14.400px; letter-spacing: -.2px; color: #0f141a; position: relative; }
.side-list h4::before { content: ""; position: absolute; left: -17px; top: 8px; border: 5px solid transparent; border-top: 8px solid #0f141a; border-bottom: 0; }
.new { color: #006ce0; font-weight: 700; font-size: 10.800px; margin-left: 2.500px; border-bottom: 1px dashed #006ce0; display: inline-block; line-height: 15px; }
.scroll { width: 21px; background: #f1f1f1; display: flex; flex-direction: column; align-items: center; padding: 9px 0; }
.thumb { width: 17px; height: 557px; background: #c1c1c1; margin: 7px 0 auto; }

.steps { width: 281px; flex: none; list-style: none; padding: 19px 0 0 14px; }
.steps li { height: 52.500px; display: flex; }
.steps small { display: block; font-size: 10.800px; line-height: 17px; color: #656871; }
.steps p { line-height: 20px; white-space: nowrap; letter-spacing: -.04px; }
.steps .on p { color: #006ce0; font-weight: 700; letter-spacing: -.13px; line-height: 19px; }
.rail { width: 20px; margin-right: 7px; padding-top: 19px; position: relative; display: flex; justify-content: center; }
.steps li:not(:last-child) .rail::after { content: ""; position: absolute; left: 9px; top: 40px; height: 33px; width: 2px; background: #c6c6cd; }
.dot { width: 14px; height: 14px; margin-top: 2px; border-radius: 50%; background: #424650; }
.ring { width: 19px; height: 19px; border: 2px solid #006ce0; border-radius: 50%; background: #006ce0; box-shadow: inset 0 0 0 2.500px #fff; }

.content { width: 1360px; padding-top: 30px; color: #0f141a; }
h1 { font-size: 21.600px; line-height: 28px; letter-spacing: -.64px; height: 37px; }
.card { border: 1px solid #c6c6cd; border-radius: 15px; background: #fff; }
.details { height: 246px; padding: 12px 19px 0; }
h2 { font-size: 18px; line-height: 24px; letter-spacing: -.5px; }
h2 a { font-size: 10.800px; color: #006ce0; letter-spacing: 0; margin-left: 3px; line-height: 1; vertical-align: 1px; }
label { display: block; font-weight: 700; line-height: 18px; margin-top: 7px; letter-spacing: -.12px; }
label.second { margin-top: 14.500px; }
.input { width: 875px; height: 26px; margin-top: 5px; border-radius: 7px; background: #ebebf0; color: #b4b4bb; line-height: 25px; padding-left: 12px; letter-spacing: .1px; }
.hint { font-size: 10.800px; line-height: 16px; margin-top: 3px; color: #656871; letter-spacing: .07px; }
.textarea { width: 875px; height: 62px; margin-top: 4.500px; border: 1px solid #8c8c94; border-radius: 7px; color: #656871; font-style: italic; padding: 1px 0 0 11px; position: relative; line-height: 20px; letter-spacing: .17px; }
.textarea svg { position: absolute; right: 2px; bottom: 2px; }
.tags { height: 68px; margin-top: 15px; padding: 11px 0 0 22px; display: flex; gap: 13px; }
.tags svg { margin-top: 8px; margin-right: -1px; }
.tags h2 { letter-spacing: -.28px; }
.tags p { line-height: 20px; color: #424650; }
.actions { display: flex; justify-content: flex-end; margin-top: 15px; }
.link { color: #006ce0; font-weight: 700; margin-right: 24px; letter-spacing: -.2px; padding-bottom: 1px; }
.primary { width: 61px; height: 24px; border-radius: 12px; background: #f90; font-weight: 700; color: #0f141a; padding-bottom: 1px; letter-spacing: -.1px; }

.awsfoot { height: 32px; flex: none; background: #161d26; color: #ebebf0; font-size: 10.800px; display: flex; align-items: center; padding: 0 15px; letter-spacing: -.2px; white-space: nowrap; }
.f-shell { margin-left: 5px; margin-bottom: 1px; }
.f-feed { margin-left: 24px; }
.f-copy { margin-left: auto; color: #c6c6cd; letter-spacing: .06px; }
.f-priv { margin-left: 28px; }
.f-terms { margin-left: 23px; letter-spacing: -.3px; }
.f-cook { margin-left: 23px; letter-spacing: -.41px; }

/* desktop taskbar */
.taskbar { height: 60px; flex: none; background: #dbdbdb; border-top: 1px solid #b9b9b9; display: flex; align-items: center; position: relative; font-family: "Open Sans", "Noto Sans", sans-serif; font-size: 14.500px; letter-spacing: -.3px; color: #1b1b1b; }
.weather { width: 433px; padding-left: 26px; display: flex; align-items: center; position: relative; line-height: 20px; flex: none; letter-spacing: -.05px; }
.weather > div { margin: 0 0 2px 1px; }
.weather .dim { color: #5b5b5b; }
.count { position: absolute; left: 39px; top: -3px; width: 20px; height: 20px; border-radius: 50%; background: #c42b1c; color: #fff; text-align: center; }
.start { width: 29px; height: 30px; }
.tsearch { width: 273px; height: 39px; margin-left: 18px; border-radius: 20px; background: #f4f4f4; border: 1px solid #c3c3c3; display: flex; align-items: center; padding-left: 13px; font-size: 17px; color: #5b5b5b; flex: none; }
.tsearch span { margin-left: 12px; }
.palms { width: 58px; height: 36px; margin-left: auto; margin-right: 7px; }
.apps { display: flex; margin-left: 3.500px; }
.app { width: 55px; height: 48px; display: flex; justify-content: center; align-items: center; position: relative; }
.app > svg { width: 32px; height: 32px; margin-bottom: 1px; position: relative; z-index: 1; }
.app.run::after { content: ""; position: absolute; bottom: 0; width: 8px; height: 4px; border-radius: 2px; background: #858585; z-index: 1; }
.app.focus::before { content: ""; position: absolute; left: 3px; right: 3px; top: 0; bottom: 0; border-radius: 5px; background: #efefef; border: 1px solid #d0d0d0; }
.app.focus::after { width: 20px; background: #0078d4; }
.badge { position: absolute; left: 29px; top: 2px; width: 20px; height: 20px; border-radius: 50%; color: #fff; font-size: 13px; line-height: 20px; text-align: center; z-index: 2; }
.badge.one { background: #0078d4; left: 30px; width: 19px; height: 19px; }
.badge.purple { background: #ab47bc; color: #f0d5f5; }
.badge.blue { background: #0288d1; color: #cfeaf8; }
.tray { margin-left: auto; display: flex; align-items: center; padding-right: 25px; line-height: 20px; }
.t-up { width: 14px; height: 9px; }
.t-cloud { width: 22px; height: 18px; margin-left: 22px; }
.lang { width: 40px; margin-left: 17px; text-align: center; letter-spacing: -.5px; }
.t-wifi { width: 20px; height: 16px; margin-left: 17px; }
.t-vol { width: 20px; height: 16px; margin-left: 10px; }
.t-bat { width: 20px; height: 17px; margin-left: 10px; }
.clock { width: 90px; margin-left: 8px; padding-bottom: 1px; text-align: right; letter-spacing: .2px; }
.t-bell { width: 18px; height: 20px; margin-left: 10px; }
```
